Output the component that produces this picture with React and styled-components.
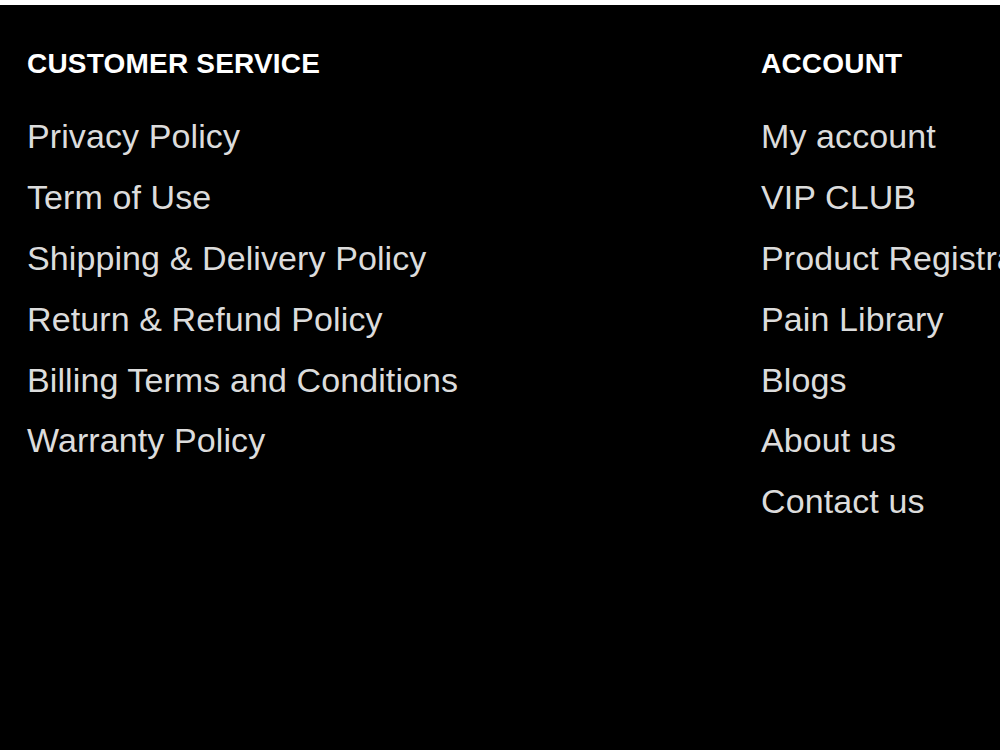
import styled, { createGlobalStyle } from 'styled-components'

const GlobalStyle = createGlobalStyle`
    html, body {
        margin: 0;
        padding: 0;
        background: #fff;
        overflow: hidden;
    }
    body {
        font-family: "Liberation Sans", Arial, sans-serif;
    }
`

const SFooter = styled.footer`
    margin-top: 5px;
    min-height: 745px;
    background: #000;
    box-sizing: border-box;
    padding: 45px 0 0 27px;
    display: grid;
    grid-template-columns: 734px 1fr;
    overflow: hidden;
`

const SColumn = styled.div`
    display: flex;
    flex-direction: column;
    min-width: 0;
`

const STitle = styled.h3`
    margin: 0;
    color: #fff;
    font-size: 28px;
    font-weight: 700;
    line-height: 28px;
    letter-spacing: 0.2px;
    white-space: nowrap;
`

const SUl = styled.ul`
    list-style: none;
    margin: 28.4px 0 0;
    padding: 0;
`

const SLi = styled.li`
    font-size: 34px;
    line-height: 60.8px;
    white-space: nowrap;
`

const SA = styled.a`
    color: #dcdcdc;
    letter-spacing: 0.1px;
    text-decoration: none;
`

const columns = [
    {
        title: 'CUSTOMER SERVICE',
        links: [
            'Privacy Policy',
            'Term of Use',
            'Shipping & Delivery Policy',
            'Return & Refund Policy',
            'Billing Terms and Conditions',
            'Warranty Policy',
        ],
    },
    {
        title: 'ACCOUNT',
        links: [
            'My account',
            'VIP CLUB',
            'Product Registration',
            'Pain Library',
            'Blogs',
            'About us',
            'Contact us',
        ],
    },
]

const App = () => {
    return (
        <>
            <GlobalStyle />
            <SFooter>
                {columns.map(({title, links}) => (
                    <SColumn key={title}>
                        <STitle>{title}</STitle>
                        <SUl>
                            {links.map(link => (
                                <SLi key={link}>
                                    <SA href="#">{link}</SA>
                                </SLi>
                            ))}
                        </SUl>
                    </SColumn>
                ))}
            </SFooter>
        </>
    )
}

export default App
